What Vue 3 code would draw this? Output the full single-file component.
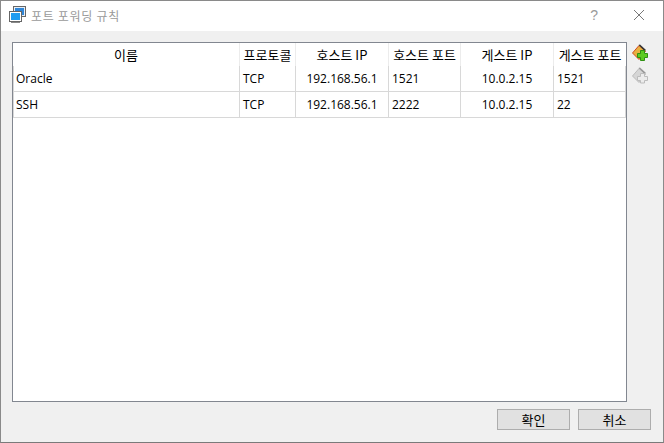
<script setup>
const headers = [
  { label: '이름', cls: 'c1' },
  { label: '프로토콜', cls: 'c2' },
  { label: '호스트 IP', cls: 'c3' },
  { label: '호스트 포트', cls: 'c4' },
  { label: '게스트 IP', cls: 'c5' },
  { label: '게스트 포트', cls: 'c6' }
]
const rows = [
  ['Oracle', 'TCP', '192.168.56.1', '1521', '10.0.2.15', '1521'],
  ['SSH', 'TCP', '192.168.56.1', '2222', '10.0.2.15', '22']
]
const aligns = ['', '', 'center', '', 'center', '']
</script>

<template>
  <div class="window">
    <header class="titlebar">
      <svg class="appicon" width="18" height="18" viewBox="0 0 18 18">
        <rect x="4.5" y="0.5" width="12" height="10" fill="#e8eef5" stroke="#666" />
        <rect x="6" y="2" width="9" height="7" fill="#2f86d8" />
        <rect x="0.5" y="5.5" width="12" height="10" fill="#fff" stroke="#666" />
        <rect x="2" y="7" width="9" height="7" fill="#1f9cf0" />
        <rect x="2" y="16" width="9" height="1" fill="#888" />
      </svg>
      <span class="title">포트 포워딩 규칙</span>
      <span class="spacer"></span>
      <span class="help">?</span>
      <svg class="close" width="12" height="12" viewBox="0 0 12 12">
        <path d="M1 1 L11 11 M11 1 L1 11" stroke="#777" stroke-width="1" fill="none" />
      </svg>
    </header>

    <main class="body">
      <div class="content">
        <div class="panel">
          <div class="row head">
            <div v-for="h in headers" :key="h.label" class="cell" :class="h.cls">{{ h.label }}</div>
          </div>
          <div v-for="(r, i) in rows" :key="i" class="row data">
            <div
              v-for="(v, j) in r"
              :key="j"
              class="cell"
              :class="[headers[j].cls, aligns[j]]"
            >{{ v }}</div>
          </div>
        </div>
        <div class="tools">
          <svg width="18" height="18" viewBox="0 0 18 18">
            <path d="M1.5 9 L8 1.5 L14.5 7 L8 15.5 Z" fill="#e8b040" stroke="#d24a20" />
            <path d="M7.5 1 L9 0.5 L15 6 L13.5 7 Z" fill="#333" />
            <path d="M9.5 6.5 H13.5 V9.5 H16.5 V13.5 H13.5 V16.5 H9.5 V13.5 H6.5 V9.5 H9.5 Z" fill="#5ccb20" stroke="#2f9012" stroke-width="1" />
          </svg>
          <svg width="18" height="18" viewBox="0 0 18 18">
            <path d="M1.5 9 L8 1.5 L14.5 7 L8 15.5 Z" fill="#d6d6d6" stroke="#bcbcbc" />
            <path d="M7.5 1 L9 0.5 L15 6 L13.5 7 Z" fill="#999" />
            <path d="M9.5 6.5 H13.5 V9.5 H16.5 V13.5 H13.5 V16 H9.5 V13.5 H6.5 V9.5 H9.5 Z" fill="#ececec" stroke="#bcbcbc" stroke-width="1" />
          </svg>
        </div>
      </div>
      <footer class="actions">
        <button class="btn">확인</button>
        <button class="btn">취소</button>
      </footer>
    </main>
  </div>
</template>

<style scoped>
.window {
  width: 664px;
  height: 443px;
  box-sizing: border-box;
  display: flex;
  flex-direction: column;
  border: 1px solid #8a8a8a;
  border-bottom-color: #7a7a7a;
  font-family: "Noto Sans CJK KR", "Open Sans", sans-serif;
  font-size: 13px;
  color: #000;
  background: #f0f0f0;
  overflow: hidden;
}
.titlebar {
  height: 30px;
  flex: none;
  display: flex;
  align-items: center;
  background: #fff;
  padding: 0 18px 2px 8px;
  box-sizing: border-box;
}
.appicon { flex: none; }
.title {
  margin-left: 4px;
  color: #9a9a9a;
  font-size: 12px;
  letter-spacing: 0.7px;
}
.spacer { flex: 1; }
.help {
  color: #9a9a9a;
  font-family: "Liberation Sans", sans-serif;
  font-size: 14px;
  margin-right: 35px;
}
.body {
  flex: 1;
  display: flex;
  flex-direction: column;
  padding: 11px 12px 0 11px;
  min-height: 0;
}
.content {
  height: 360px;
  flex: none;
  display: flex;
  gap: 4px;
}
.panel {
  width: 615px;
  flex: none;
  box-sizing: border-box;
  border: 1px solid #828790;
  background: #fff;
}
.row {
  display: flex;
  box-sizing: border-box;
}
.head { height: 23px; }
.data {
  height: 26px;
  border-bottom: 1px solid #d8d8d8;
}
.cell {
  box-sizing: border-box;
  display: flex;
  align-items: center;
  padding: 0 2px;
  white-space: nowrap;
  overflow: hidden;
  line-height: 1;
}
.head .cell {
  justify-content: center;
  border-right: 1px solid #ececec;
  padding: 0;
}
.head .c6 { border-right: none; }
.data .cell {
  border-right: 1px solid #d8d8d8;
  font-family: "Open Sans", "Noto Sans", sans-serif;
  font-size: 12px;
  padding-left: 3px;
}
.data .c1 {
  border-left: 1px solid #d8d8d8;
  padding-left: 2px;
}
.data .center { padding-left: 2px; }
.center { justify-content: center; }
.c1 { width: 227px; }
.c2 { width: 56px; }
.c3 { width: 93px; }
.c4 { width: 72px; }
.c5 { width: 93px; }
.c6 { width: 72px; }
.tools {
  display: flex;
  flex-direction: column;
  gap: 5px;
  padding-top: 2px;
}
.actions {
  display: flex;
  justify-content: flex-end;
  gap: 8px;
  padding-top: 7px;
}
.btn {
  width: 73px;
  height: 21px;
  box-sizing: border-box;
  border: 1px solid #adadad;
  background: #e1e1e1;
  font-family: "Noto Sans CJK KR", sans-serif;
  font-size: 13px;
  line-height: 1;
  padding: 0;
  color: #000;
}
</style>
